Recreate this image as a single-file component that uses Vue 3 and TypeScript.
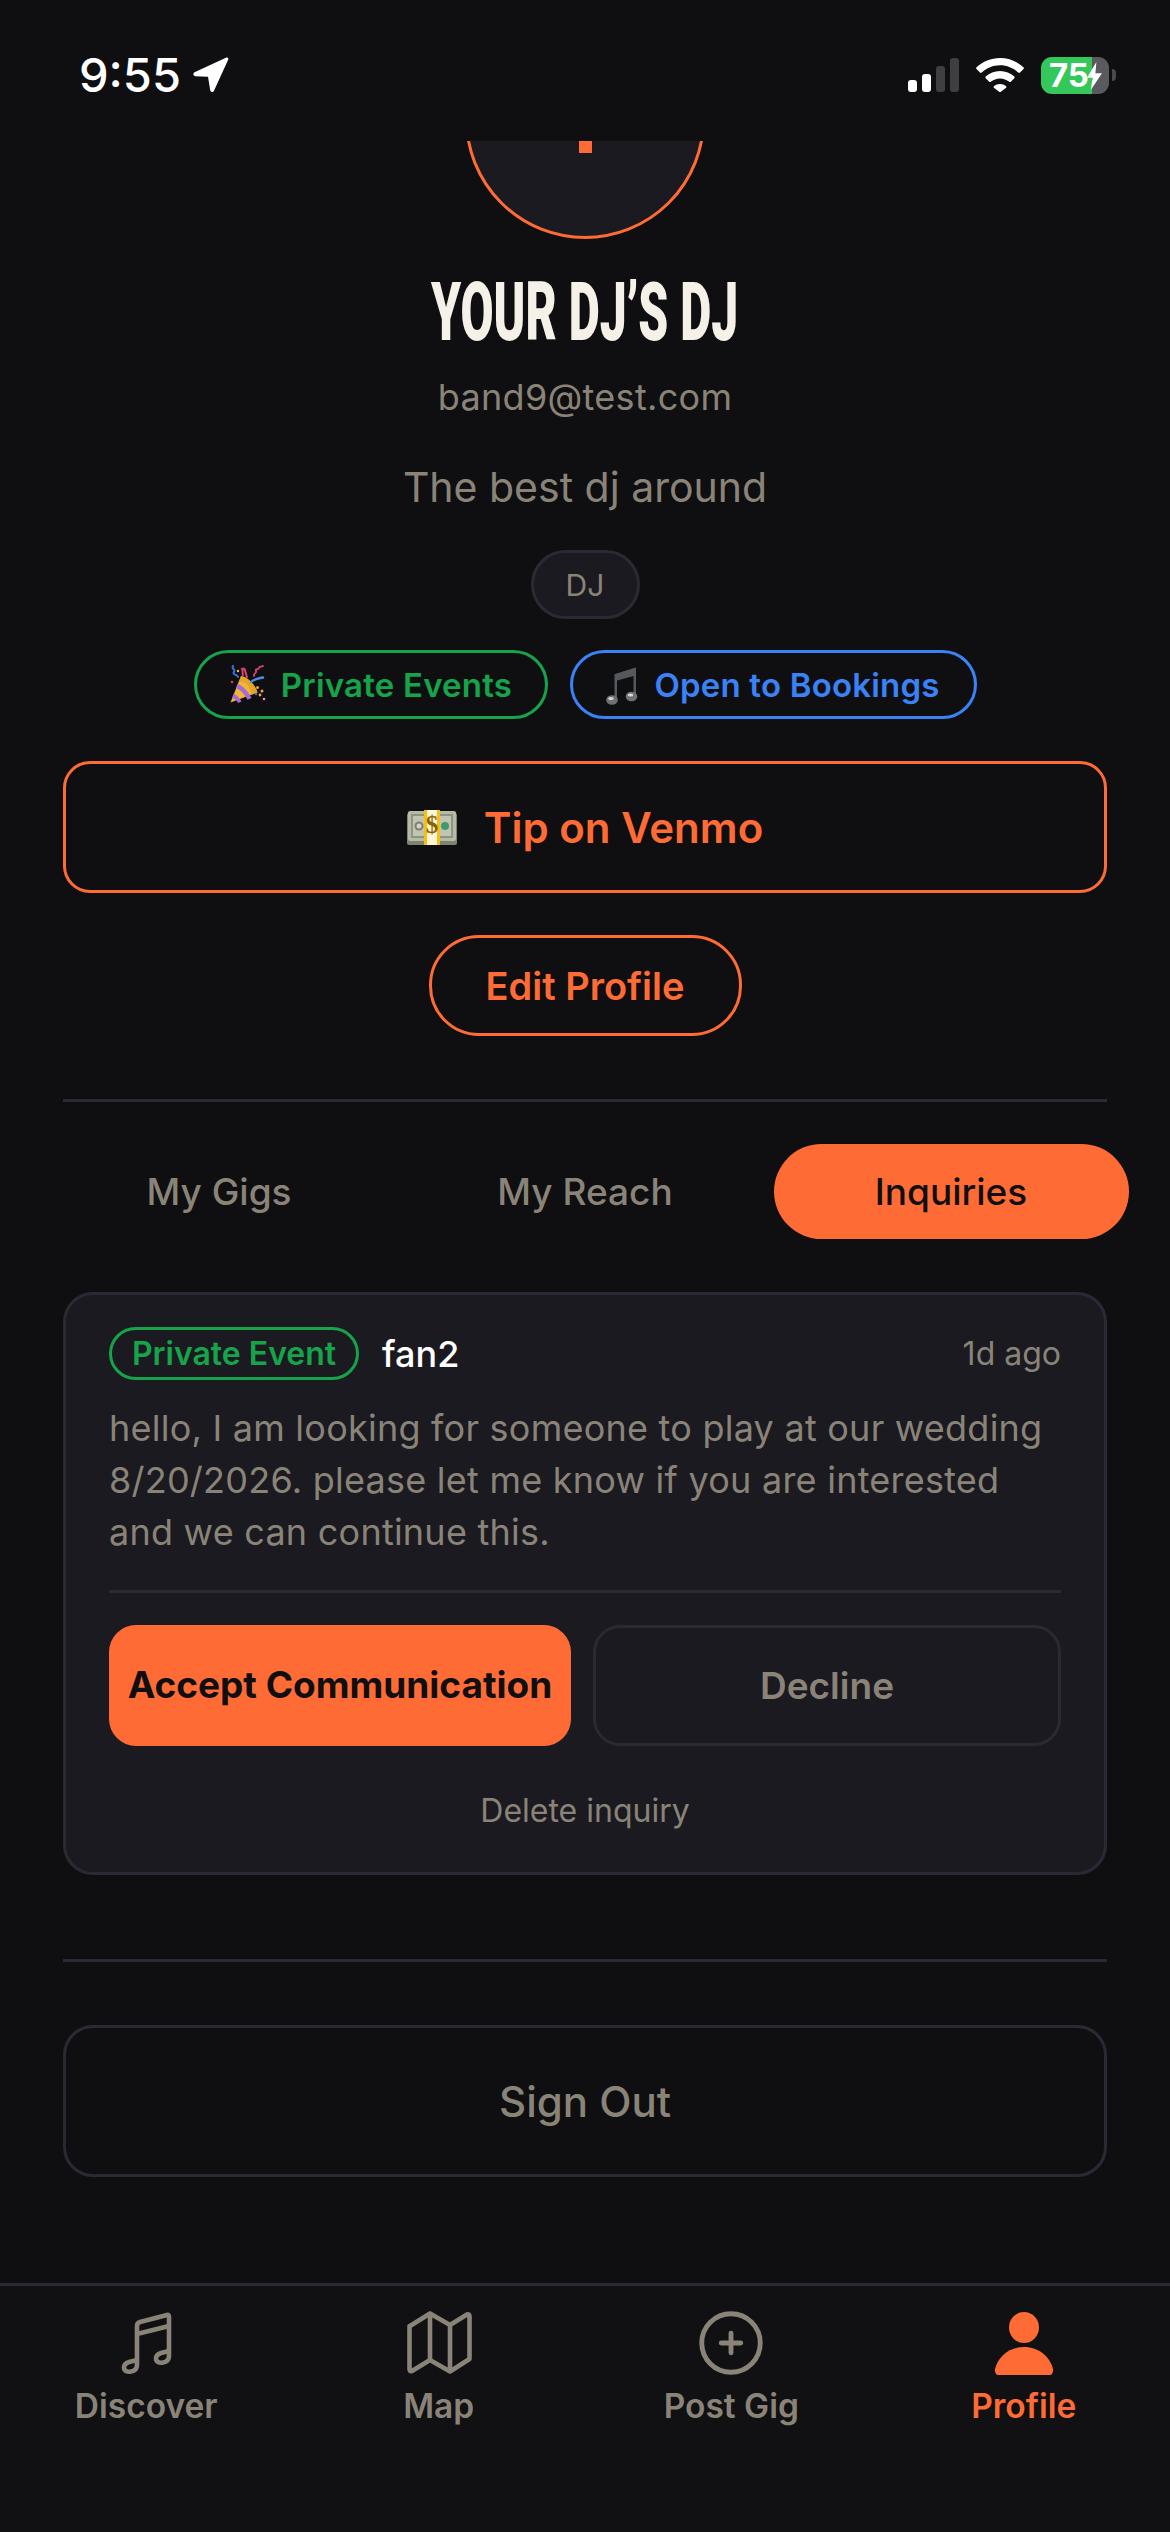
<script setup lang="ts">
interface NavItem {
  label: string
  active?: boolean
}

const tabs = ['My Gigs', 'My Reach', 'Inquiries']
const activeTab = 'Inquiries'

const navItems: NavItem[] = [
  { label: 'Discover' },
  { label: 'Map' },
  { label: 'Post Gig' },
  { label: 'Profile', active: true },
]
</script>

<template>
  <div class="screen">
    <header class="status-bar">
      <div class="status-left">
        <span class="time">9:55</span>
        <svg class="arrow" viewBox="0 0 36 36"><path d="M33.5 1.5c1.2-.5 2.3.6 1.8 1.8L21.4 33.800c-.8 1.800-3.300 1.500-3.700-.4L15.600 20.300 3 19.600c-1.900-.3-2.300-2.800-.5-3.700z" fill="#fff" /></svg>
      </div>
      <div class="status-right">
        <div class="signal">
          <span class="bar on b1"></span>
          <span class="bar on b2"></span>
          <span class="bar b3"></span>
          <span class="bar b4"></span>
        </div>
        <svg class="wifi" viewBox="0 0 48 34"><path d="M24 0c9 0 17.300 3.500 23.500 9.300.5.500.5 1.200 0 1.700l-3.500 3.600c-.4.500-1.200.5-1.700 0C37.400 10.100 31 7.300 24 7.300S10.600 10.100 5.700 14.600c-.5.500-1.300.5-1.700 0L.5 11c-.5-.5-.5-1.200 0-1.700C6.700 3.500 15 0 24 0z" fill="#fff" /><path d="M24 13c5.500 0 10.500 2.100 14.300 5.500.5.500.5 1.200 0 1.700l-3.500 3.500c-.4.500-1.100.5-1.600.100-2.500-2.100-5.700-3.400-9.200-3.400s-6.700 1.300-9.200 3.400c-.5.400-1.200.4-1.600-.1l-3.500-3.500c-.5-.5-.5-1.200 0-1.700C13.500 15.100 18.500 13 24 13z" fill="#fff" /><path d="M24 26c2.300 0 4.400.8 6 2.200.5.400.5 1.100.1 1.600l-5.200 3.900c-.5.400-1.300.4-1.800 0l-5.200-3.900c-.4-.5-.4-1.200.1-1.600 1.600-1.400 3.700-2.200 6-2.200z" fill="#fff" /></svg>
        <div class="battery">
          <div class="battery-body">
            <span class="battery-text">75</span>
            <svg class="bolt" viewBox="0 0 16 30"><path d="M10 0 0 17h6l-2 13 12-18H9z" fill="#fff" /></svg>
          </div>
          <span class="battery-nub"></span>
        </div>
      </div>
    </header>

    <main class="content">
      <div class="avatar-clip">
        <div class="avatar">
          <span class="avatar-mark"></span>
        </div>
      </div>

      <h1 class="name"><span>YOUR DJ’S DJ</span></h1>
      <p class="email">band9@test.com</p>
      <p class="bio">The best dj around</p>
      <span class="role-pill">DJ</span>

      <div class="badges">
        <span class="badge green">
          <svg class="emoji-sm" viewBox="0 0 40 40">
            <path d="M1.500 37.500 12 11c6 .500 14 8 16.500 16.500z" fill="#f2b632" />
            <path d="M12 11c6 .500 14 8 16.500 16.500l-6 2.500C21 21.500 17 15.500 9.500 17.500z" fill="#dc9e25" opacity=".65" />
            <path d="M8.500 19c4.500 1 10.500 7 14 14l-4 1.700C15.500 29 11 24.500 7 23z" fill="#a66bd6" />
            <path d="M4.500 29c3 .500 6 3.500 8 7.500l-3.500 1.400C7.500 35 5.500 33.500 3 33z" fill="#a66bd6" />
            <path d="M22 17c3-3 7-3.500 12-4.500" stroke="#4a90e2" stroke-width="2.400" fill="none" stroke-linecap="round" />
            <path d="M14 11c-1-3 .500-5-1-7 2-1 3 0 3.500 3 .5 2 1 3 1.500 6" stroke="#e0436f" stroke-width="2" fill="none" />
            <path d="M4 1c-2 3 3 3 1 6s3 2 4 5" stroke="#3f6fd8" stroke-width="2" fill="none" stroke-linecap="round" />
            <path d="M25 11c-1-3 3-2 2-5s3-1 3-3 2-1 4-2" stroke="#e0436f" stroke-width="1.800" fill="none" stroke-linecap="round" />
            <circle cx="28.500" cy="22.500" r="1.500" fill="#f2a33a" />
            <circle cx="33" cy="26" r="1.500" fill="#f2a33a" />
            <circle cx="31" cy="30" r="1.400" fill="#f2a33a" />
            <circle cx="35" cy="34" r="1.300" fill="#ef8fa8" />
            <circle cx="27" cy="29" r="1.200" fill="#3f6fd8" />
            <circle cx="3" cy="17" r="1.300" fill="#d9365c" />
            <circle cx="9" cy="6" r="1.200" fill="#f2c230" />
          </svg>
          Private Events
        </span>
        <span class="badge blue">
          <svg class="emoji-sm note" viewBox="0 0 32 40">
            <path d="M9.500 9 30 2.500v8L9.500 15z" fill="#3a2c2c" />
            <path d="M8.500 9.200 30 2.500v30h-2.500V11L11 15.500V36H8.500z" fill="#55585c" />
            <ellipse cx="6" cy="35" rx="5.800" ry="4.800" fill="#6e7175" />
            <ellipse cx="25.500" cy="31.500" rx="5.800" ry="4.800" fill="#6e7175" />
            <ellipse cx="5" cy="33.500" rx="2.800" ry="1.500" fill="#d5d7d9" />
            <ellipse cx="24.500" cy="30" rx="2.800" ry="1.500" fill="#d5d7d9" />
          </svg>
          Open to Bookings
        </span>
      </div>

      <button class="venmo-btn">
        <svg class="emoji-money" viewBox="0 0 50 35">
          <rect x="0" y="3" width="50" height="32" rx="2" fill="#7d8570" />
          <rect x="1" y="1" width="48" height="30" rx="2" fill="#b6bba6" />
          <rect x="4" y="4" width="42" height="24" fill="#8e9583" />
          <rect x="6" y="6" width="38" height="20" fill="#c0c4b1" />
          <circle cx="12" cy="16" r="4.500" fill="#7b8172" />
          <circle cx="12" cy="16" r="2.500" fill="#d2d5c5" />
          <circle cx="38" cy="16" r="4" fill="#3f9a70" />
          <rect x="17" y="0" width="16" height="35" fill="#f7bf12" />
          <rect x="20" y="0" width="10" height="35" fill="#fff6d8" />
          <text x="25" y="23" text-anchor="middle" class="money-sign">$</text>
        </svg>
        <span>Tip on Venmo</span>
      </button>

      <button class="edit-btn">Edit Profile</button>

      <div class="divider first"></div>

      <nav class="tabs">
        <button v-for="tab in tabs" :key="tab" class="tab" :class="{ active: tab === activeTab }">{{ tab }}</button>
      </nav>

      <section class="card">
        <div class="card-head">
          <span class="event-pill">Private Event</span>
          <span class="fan">fan2</span>
          <span class="ago">1d ago</span>
        </div>
        <p class="message">hello, I am looking for someone to play at our wedding 8/20/2026. please let me know if you are interested and we can continue this.</p>
        <div class="card-line"></div>
        <div class="actions">
          <button class="accept">Accept Communication</button>
          <button class="decline">Decline</button>
        </div>
        <div class="delete">Delete inquiry</div>
      </section>

      <div class="divider second"></div>

      <button class="signout">Sign Out</button>
    </main>

    <footer class="bottom-nav">
      <div v-for="item in navItems" :key="item.label" class="nav-item" :class="{ active: item.active }">
        <svg v-if="item.label === 'Discover'" class="nav-icon" viewBox="0 0 78 78" fill="none" stroke="currentColor" stroke-width="4.600" stroke-linecap="round" stroke-linejoin="round"><path d="M30 30 62 22M30 61V22q0-3 3-4L60 11q2-.5 2 2V52c0 4-3 6-6 6.500-4 1-7-1-7-4s2-4.500 5-5.500l8-2M30 61c0 4-3 6-6 6.500-4 1-7-1-7-4s2-4.500 5-5.500l8-2" /></svg>
        <svg v-else-if="item.label === 'Map'" class="nav-icon" viewBox="0 0 78 78" fill="none" stroke="currentColor" stroke-width="4.600" stroke-linecap="round" stroke-linejoin="round"><path d="M10 22 30 9.500 50 21 67 10.500q2.500-1 2.500 2V55L50 67.500 30 56 12 67q-2.500 1-2.500-2V22ZM30 9.500V56M50 21V67.500" /></svg>
        <svg v-else-if="item.label === 'Post Gig'" class="nav-icon" viewBox="0 0 24 24" fill="none" stroke="currentColor" stroke-width="1.500" stroke-linecap="round" stroke-linejoin="round"><path d="M12 9v6m3-3H9m12 0a9 9 0 1 1-18 0 9 9 0 0 1 18 0Z" /></svg>
        <svg v-else class="nav-icon" viewBox="0 0 78 78" fill="currentColor"><ellipse cx="39" cy="23.500" rx="15" ry="15.500" /><path d="M39 43c-15 0-26 10-29 22-.5 3 1 6 3 6h52c2 0 3.500-3 3-6-3-12-14-22-29-22z" /></svg>
        <span class="nav-label">{{ item.label }}</span>
      </div>
    </footer>
  </div>
</template>

<style>
body {
  background: #0f0f12;
}
</style>

<style scoped>
.screen {
  width: 1170px;
  height: 2532px;
  background: #0f0f12;
  display: flex;
  flex-direction: column;
  font-family: Inter, "Noto Sans", sans-serif;
  color: #8a8478;
  overflow: hidden;
}

button {
  font-family: inherit;
  cursor: pointer;
}

/* status bar */
.status-bar {
  flex: none;
  height: 141px;
  padding: 57px 54px 0 79px;
  box-sizing: border-box;
  display: flex;
  justify-content: space-between;
  align-items: flex-start;
}

.status-left {
  display: flex;
  align-items: center;
  gap: 11px;
  height: 35px;
}

.time {
  font-size: 47px;
  font-weight: 500;
  color: #fff;
  line-height: 35px;
}

.arrow {
  width: 37px;
  height: 37px;
}

.status-right {
  display: flex;
  align-items: center;
  height: 36px;
}

.signal {
  display: flex;
  align-items: flex-end;
  gap: 5px;
  height: 34px;
  margin-right: 17px;
}

.bar {
  width: 9px;
  border-radius: 3px;
  background: #3f3f42;
}

.bar.on {
  background: #fff;
}

.b1 { height: 12px; }
.b2 { height: 18px; }
.b3 { height: 26px; }
.b4 { height: 34px; }

.wifi {
  width: 48px;
  height: 34px;
  margin-right: 17px;
}

.battery {
  display: flex;
  align-items: center;
  gap: 3px;
}

.battery-body {
  position: relative;
  width: 68px;
  height: 37px;
  border-radius: 11px;
  background: linear-gradient(90deg, #34c759 0, #34c759 51px, #5a5a5e 51px);
  display: flex;
  align-items: center;
  padding-left: 8px;
  box-sizing: border-box;
}

.battery-text {
  font-size: 33px;
  font-weight: 700;
  color: #fff;
  line-height: 37px;
}

.bolt {
  position: absolute;
  left: 46px;
  top: 5px;
  width: 15px;
  height: 28px;
}

.battery-nub {
  width: 4px;
  height: 12px;
  border-radius: 0 4px 4px 0;
  background: #4a4a4d;
}

/* profile */
.content {
  padding: 0 63px;
  display: flex;
  flex-direction: column;
  align-items: center;
}

.avatar-clip {
  height: 98px;
  width: 100%;
  overflow: hidden;
  display: flex;
  justify-content: center;
  flex: none;
}

.avatar {
  width: 240px;
  height: 240px;
  flex: none;
  margin-top: -142px;
  border-radius: 50%;
  border: 3px solid #ff6b35;
  background: #1b1a21;
  box-sizing: border-box;
  display: flex;
  justify-content: center;
}

.avatar-mark {
  width: 13px;
  height: 12px;
  margin-top: 139px;
  background: #ff6b35;
}

.name {
  margin: 34px 0 0;
  height: 79px;
  font-family: Roboto, "Liberation Sans", sans-serif;
  font-size: 82px;
  line-height: 79px;
  font-weight: 900;
  color: #f5f0e8;
  white-space: nowrap;
}

.name span {
  display: inline-block;
  transform: scaleX(0.585);
}

.email {
  margin: 23px 0 0;
  font-size: 36px;
  line-height: 44px;
  letter-spacing: 0.3px;
}

.bio {
  margin: 43px 0 0;
  font-size: 41px;
  line-height: 50px;
}

.role-pill {
  margin-top: 38px;
  width: 109px;
  height: 69px;
  box-sizing: border-box;
  border: 3px solid #2a2a35;
  border-radius: 35px;
  background: #1b1a21;
  font-size: 30px;
  display: flex;
  align-items: center;
  justify-content: center;
}

.badges {
  margin-top: 31px;
  display: flex;
  gap: 22px;
}

.badge {
  height: 69px;
  box-sizing: border-box;
  border: 3px solid;
  border-radius: 35px;
  font-size: 33px;
  font-weight: 600;
  letter-spacing: 0.2px;
  display: flex;
  align-items: center;
  justify-content: center;
  gap: 12px;
}

.badge.green {
  width: 354px;
  color: #16a34a;
  border-color: #16a34a;
}

.badge.blue {
  width: 407px;
  gap: 16px;
  color: #3b82f6;
  border-color: #3b82f6;
}

.emoji-sm {
  width: 40px;
  height: 40px;
  flex: none;
}

.emoji-sm.note {
  width: 32px;
}

.venmo-btn {
  margin-top: 42px;
  width: 100%;
  height: 132px;
  background: transparent;
  border: 3px solid #ff6b35;
  border-radius: 27px;
  color: #ff6b35;
  font-size: 42px;
  font-weight: 600;
  display: flex;
  align-items: center;
  justify-content: center;
  gap: 27px;
}

.emoji-money {
  width: 50px;
  height: 35px;
  flex: none;
}

.money-sign {
  font-family: "Liberation Serif", serif;
  font-size: 25px;
  font-weight: 700;
  fill: #8a6508;
}

.edit-btn {
  margin-top: 42px;
  width: 313px;
  height: 101px;
  background: transparent;
  border: 3px solid #ff6b35;
  border-radius: 50px;
  color: #ff6b35;
  font-size: 38px;
  font-weight: 600;
}

.divider {
  width: 100%;
  height: 3px;
  background: #2a2a35;
  flex: none;
}

.divider.first {
  margin-top: 63px;
}

.divider.second {
  margin-top: 84px;
}

.tabs {
  margin-top: 42px;
  align-self: center;
  display: flex;
  gap: 11px;
}

.tab {
  width: 355px;
  height: 95px;
  flex: none;
  border: none;
  border-radius: 48px;
  background: transparent;
  color: #8a8478;
  font-size: 37px;
  font-weight: 500;
}

.tab.active {
  background: #ff6b35;
  color: #0f0f12;
}

.card {
  margin-top: 53px;
  width: 100%;
  box-sizing: border-box;
  border: 3px solid #2a2a35;
  border-radius: 30px;
  background: #1b1a21;
  padding: 32px 43px 41px;
}

.card-head {
  display: flex;
  align-items: center;
  height: 53px;
}

.event-pill {
  width: 250px;
  height: 53px;
  box-sizing: border-box;
  border: 3px solid #16a34a;
  border-radius: 27px;
  color: #16a34a;
  font-size: 32px;
  font-weight: 600;
  display: flex;
  align-items: center;
  justify-content: center;
}

.fan {
  margin-left: 23px;
  font-size: 36px;
  font-weight: 500;
  color: #fff;
}

.ago {
  margin-left: auto;
  font-size: 32px;
}

.message {
  margin: 22px 0 0;
  font-size: 36px;
  line-height: 52px;
  letter-spacing: 0.24px;
}

.card-line {
  margin-top: 32px;
  height: 3px;
  background: #2a2a35;
}

.actions {
  margin-top: 32px;
  display: flex;
  gap: 22px;
}

.accept,
.decline {
  flex: 1;
  height: 121px;
  border-radius: 27px;
  font-size: 37px;
  padding: 0;
}

.accept {
  border: none;
  background: #ff6b35;
  color: #0f0f12;
  font-weight: 700;
  white-space: nowrap;
  padding-bottom: 3px;
}

.decline {
  border: 3px solid #2a2a35;
  background: transparent;
  color: #8a8478;
  font-weight: 600;
}

.delete {
  margin-top: 45px;
  text-align: center;
  font-size: 32px;
  line-height: 40px;
}

.signout {
  margin-top: 63px;
  width: 100%;
  height: 152px;
  border: 3px solid #2a2a35;
  border-radius: 30px;
  background: transparent;
  color: #8a8478;
  font-size: 42px;
  font-weight: 500;
}

/* bottom nav */
.bottom-nav {
  margin-top: auto;
  height: 249px;
  box-sizing: border-box;
  border-top: 3px solid #2a2a35;
  background: #111114;
  display: grid;
  grid-template-columns: repeat(4, 1fr);
  padding-top: 18px;
  flex: none;
}

.nav-item {
  display: flex;
  flex-direction: column;
  align-items: center;
  color: #8a8478;
}

.nav-item.active {
  color: #ff6b35;
}

.nav-icon {
  width: 78px;
  height: 78px;
}

.nav-label {
  margin-top: 2px;
  font-size: 33.5px;
  line-height: 44px;
  font-weight: 600;
}
</style>
